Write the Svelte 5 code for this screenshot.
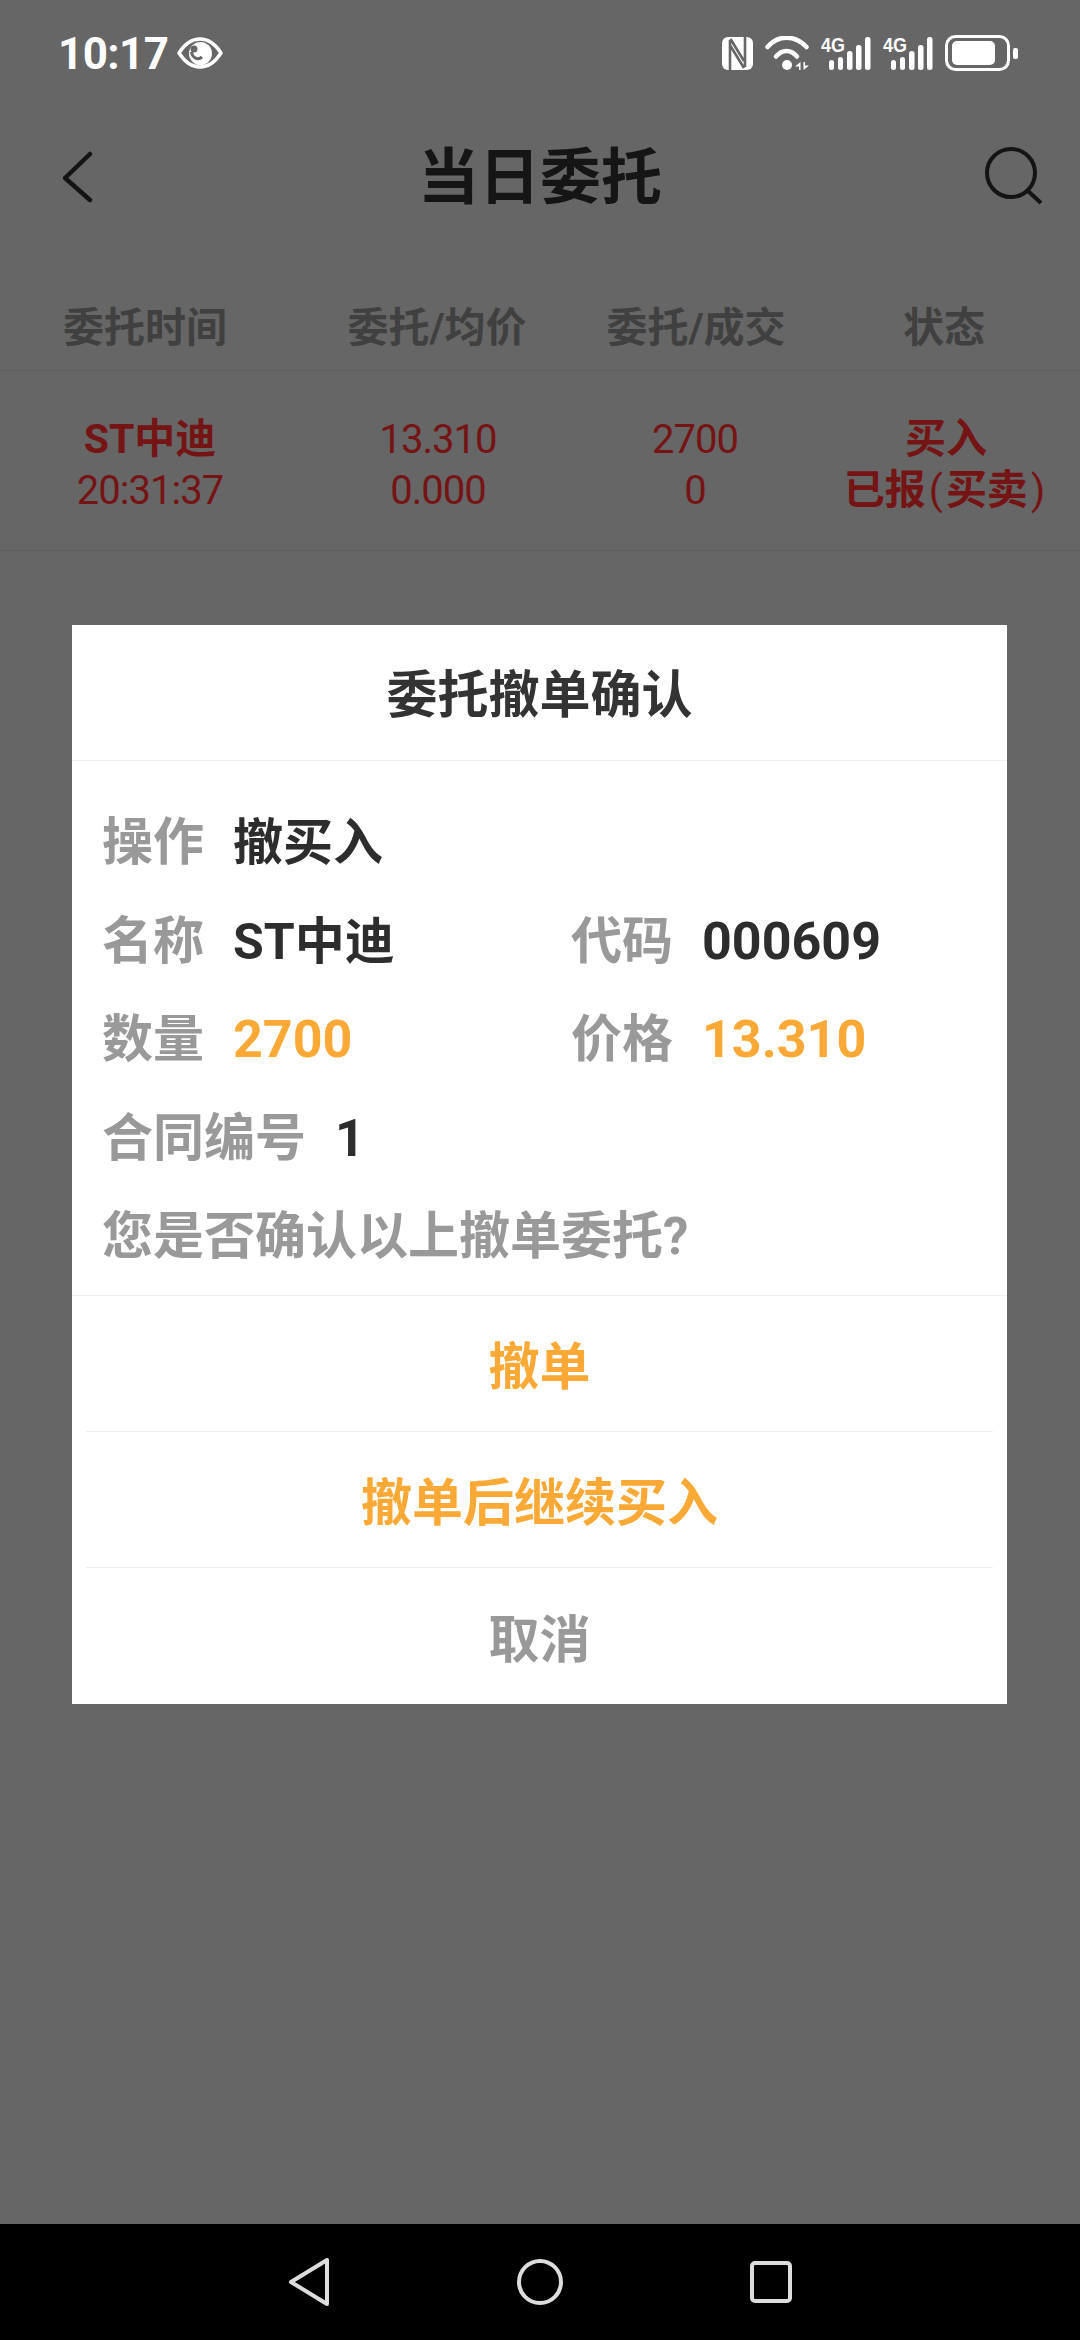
<script>
  const columns = ['委托时间', '委托/均价', '委托/成交', '状态'];
</script>

<div class="screen">
  <div class="status">
    <span class="time">10:17</span>
    <svg class="eye" width="46" height="32" viewBox="0 0 46 32" aria-hidden="true">
      <path d="M2 16C8 6.500 15 2 23 2S38 6.500 44 16C38 25.500 31 30 23 30S8 25.500 2 16Z" fill="none" stroke="#fff" stroke-width="3.4" stroke-linejoin="round" />
      <circle cx="23.500" cy="16.500" r="11.500" fill="#fff" />
      <path d="M14.500 15C15 21 21 23.500 25 20" fill="none" stroke="#666" stroke-width="3" />
      <circle cx="17" cy="12" r="3.500" fill="#666" />
    </svg>
    <div class="status-right">
      <svg class="nfc" width="31" height="33" viewBox="0 0 31 33" aria-hidden="true">
        <rect width="31" height="33" rx="6" fill="#fff" />
        <path d="M8 33V3M23 30V0M8.500 2 22 24M8.500 9 22 31" fill="none" stroke="#666" stroke-width="2.600" />
      </svg>
      <svg class="wifi" width="44" height="35" viewBox="0 0 44 35" aria-hidden="true">
        <path d="M2.500 11C13 -1.500 30 -1.500 41.500 11" fill="none" stroke="#fff" stroke-width="4.500" stroke-linecap="round" />
        <path d="M11 20.500C17 13 26 13 32 20.500" fill="none" stroke="#fff" stroke-width="4.500" stroke-linecap="round" />
        <circle cx="22" cy="29" r="5" fill="#fff" />
        <path d="M30 30.500 35.500 26V34H34V30.500ZM44 29.500 38.500 34V26H40V29.500Z" fill="#fff" />
      </svg>
      {#each [0, 1] as s (s)}
        <svg class="signal" width="50" height="41" viewBox="0 -6 50 41" aria-hidden="true">
          <text x="0" y="16" textLength="24" lengthAdjust="spacingAndGlyphs" class="net">4G</text>
          <rect x="8" y="24" width="5" height="10" rx="2.500" fill="#fff" />
          <rect x="17" y="21" width="5" height="13" rx="2.500" fill="#fff" />
          <rect x="26" y="15" width="5.500" height="19" rx="2.500" fill="#fff" />
          <rect x="35" y="9" width="5.500" height="25" rx="2.500" fill="#fff" />
          <rect x="44" y="1" width="5.500" height="33" rx="2.500" fill="#fff" />
        </svg>
      {/each}
      <svg class="battery" width="73" height="36" viewBox="0 0 73 36" aria-hidden="true">
        <rect x="1.500" y="1.500" width="62" height="33" rx="9" fill="none" stroke="#fff" stroke-width="3" />
        <rect x="7" y="6" width="43" height="24" rx="5" fill="#fff" />
        <rect x="68" y="13" width="5" height="11" rx="2" fill="#fff" />
      </svg>
    </div>
  </div>

  <header class="topbar">
    <svg width="40" height="56" viewBox="0 0 40 56" aria-hidden="true">
      <polyline points="30,4 5,28 30,50" fill="none" stroke="#141414" stroke-width="4.500" stroke-linecap="round" stroke-linejoin="round" />
    </svg>
    <h1>当日委托</h1>
    <svg width="64" height="64" viewBox="0 0 64 64" aria-hidden="true">
      <circle cx="27" cy="27" r="24" fill="none" stroke="#141414" stroke-width="4" />
      <line x1="44" y1="45" x2="57" y2="57" stroke="#141414" stroke-width="4" />
    </svg>
  </header>

  <div class="table-head">
    {#each columns as c (c)}
      <span>{c}</span>
    {/each}
  </div>

  <div class="row">
    <div class="cell"><b>ST中迪</b><span>20:31:37</span></div>
    <div class="cell"><span>13.310</span><span>0.000</span></div>
    <div class="cell"><span>2700</span><span>0</span></div>
    <div class="cell"><b>买入</b><b>已报<i>(</i>买卖<i>)</i></b></div>
  </div>

  <div class="spacer"></div>

  <nav class="nav">
    <svg width="42" height="48" viewBox="0 0 42 48" aria-hidden="true">
      <path d="M3 24 39 2V46Z" fill="none" stroke="#ddd" stroke-width="4" stroke-linejoin="round" />
    </svg>
    <svg width="46" height="46" viewBox="0 0 46 46" aria-hidden="true">
      <circle cx="23" cy="23" r="21" fill="none" stroke="#ddd" stroke-width="4" />
    </svg>
    <svg width="42" height="42" viewBox="0 0 42 42" aria-hidden="true">
      <rect x="2" y="2" width="38" height="38" rx="3" fill="none" stroke="#ddd" stroke-width="4" />
    </svg>
  </nav>

  <div class="dialog" role="dialog">
    <div class="dialog-title">委托撤单确认</div>
    <div class="info">
      <div class="line">
        <div class="pair"><span class="label">操作</span><span class="value">撤买入</span></div>
      </div>
      <div class="line">
        <div class="pair"><span class="label">名称</span><span class="value">ST中迪</span></div>
        <div class="pair"><span class="label">代码</span><span class="value num">000609</span></div>
      </div>
      <div class="line">
        <div class="pair"><span class="label">数量</span><span class="value num accent">2700</span></div>
        <div class="pair"><span class="label">价格</span><span class="value num accent">13.310</span></div>
      </div>
      <div class="line">
        <div class="pair"><span class="label">合同编号</span><span class="value num">1</span></div>
      </div>
      <div class="line"><span class="label">您是否确认以上撤单委托?</span></div>
    </div>
    <div class="actions">
      <button class="accent">撤单</button>
      <button class="accent">撤单后继续买入</button>
      <button class="cancel">取消</button>
    </div>
  </div>
</div>

<style>
  :global(body) {
    margin: 0;
    background: #666;
  }

  .screen {
    position: relative;
    width: 1080px;
    height: 2340px;
    display: flex;
    flex-direction: column;
    background: #666;
    font-family: Roboto, "Noto Sans CJK SC", sans-serif;
    overflow: hidden;
  }

  .status {
    height: 108px;
    box-sizing: border-box;
    padding: 35px 62px 0 58px;
    display: flex;
    align-items: flex-start;
    color: #fff;
  }
  .time {
    font-size: 44px;
    font-weight: 700;
    line-height: 38px;
    letter-spacing: -0.6px;
  }
  .eye {
    margin: 2px 0 0 9px;
  }
  .status-right {
    margin-left: auto;
    display: flex;
    align-items: flex-start;
    gap: 12px;
    height: 36px;
  }
  .nfc {
    margin-top: 2px;
  }
  .wifi {
    margin-top: 1px;
  }
  .signal {
    margin-top: -5px;
  }
  .net {
    font-family: "Liberation Sans", sans-serif;
    font-size: 21px;
    font-weight: 700;
    fill: #fff;
  }

  .topbar {
    height: 140px;
    box-sizing: border-box;
    padding: 0 32px 0 60px;
    display: flex;
    align-items: center;
    justify-content: space-between;
  }
  .topbar h1 {
    margin: 0 4px 12px 0;
    font-size: 61px;
    font-weight: 700;
    color: #151515;
  }

  .table-head {
    height: 123px;
    padding-top: 30px;
    display: grid;
    grid-template-columns: 290px 294px 224px 272px;
    align-items: center;
    border-bottom: 1px solid #5e5e5e;
    box-sizing: border-box;
    font-size: 41px;
    font-weight: 700;
    color: #404040;
    text-align: center;
  }

  .row {
    height: 180px;
    padding-top: 8px;
    display: grid;
    grid-template-columns: 300px 276px 238px 264px;
    align-items: center;
    border-bottom: 1px solid #5e5e5e;
    box-sizing: border-box;
    color: #751414;
    font-size: 40px;
    letter-spacing: -1px;
    text-align: center;
  }
  .cell {
    display: flex;
    flex-direction: column;
    line-height: 51px;
  }
  .cell b {
    font-size: 41px;
    font-weight: 700;
    letter-spacing: 0;
  }
  .cell i {
    font-style: normal;
    font-weight: 400;
    margin: 0 3px;
  }

  .spacer {
    flex: 1;
  }

  .nav {
    height: 116px;
    background: #000;
    display: flex;
    align-items: center;
    justify-content: center;
    gap: 187px;
  }

  .dialog {
    position: absolute;
    left: 72px;
    top: 625px;
    width: 935px;
    background: #fff;
    color: #333;
  }
  .dialog-title {
    height: 136px;
    box-sizing: border-box;
    padding-bottom: 4px;
    display: flex;
    align-items: center;
    justify-content: center;
    border-bottom: 1px solid #eee;
    font-size: 51px;
    font-weight: 700;
  }

  .info {
    padding: 28px 30px 13px;
    display: flex;
    flex-direction: column;
    border-bottom: 1px solid #eee;
    font-size: 51px;
    font-weight: 700;
  }
  .line {
    height: 98.500px;
    display: grid;
    grid-template-columns: 469px 1fr;
    align-items: center;
  }
  .line > .label {
    grid-column: 1 / -1;
  }
  .pair {
    display: flex;
    align-items: baseline;
    gap: 29px;
  }
  .label {
    color: #999;
  }
  .value {
    color: #2d2d2d;
    font-size: 50px;
  }
  .value.num {
    font-size: 52px;
  }
  .value.accent,
  button.accent {
    color: #faa937;
  }

  .actions {
    display: flex;
    flex-direction: column;
    padding: 0 14px;
  }
  button {
    height: 136px;
    border: 0;
    border-bottom: 1px solid #eee;
    background: none;
    padding: 0;
    font: inherit;
    font-size: 51px;
    font-weight: 700;
  }
  button:last-child {
    border-bottom: 0;
  }
  button.cancel {
    color: #999;
  }
</style>
